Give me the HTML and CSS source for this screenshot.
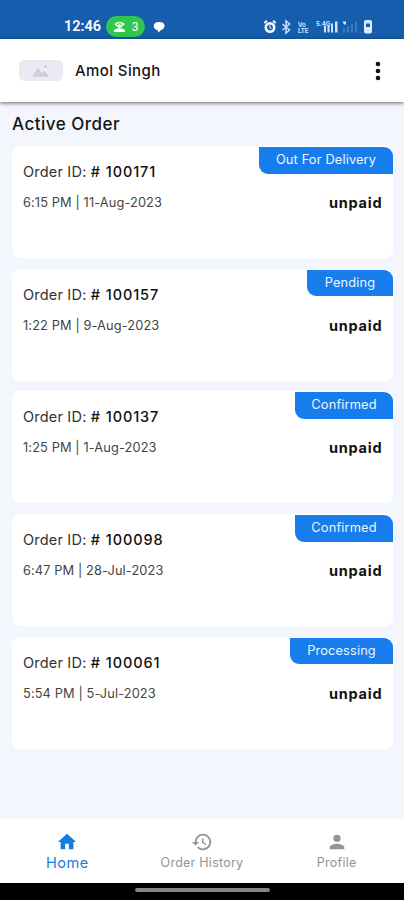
FILE: index.html
```html
<!DOCTYPE html>
<html lang="en">
<head>
<meta charset="utf-8">
<title>Active Order</title>
<link rel="stylesheet" href="styles.css">
</head>
<body>
<div class="status-bar">
  <span class="clock">12:46</span>
  <span class="hotspot"><svg width="13" height="12" viewBox="0 0 13 12"><path d="M1 3Q6.500-1.500 12 3L6.500 8Z" fill="#d9ffd9"/><path d="M4 3.500Q6.500 1.800 9 3.500" fill="none" stroke="#2fc74f"/><path d="M1 11V9l3-1.500h5L12 9v2z" fill="#fff"/></svg><span class="devices">3</span></span>
  <svg class="chat" width="12" height="12" viewBox="0 0 12 12"><path d="M5.500 1C9 .5 11.500 2 11.500 4.800c0 2-1.200 3.800-3.500 4.200L5.500 11.500l-1-2.500C2.500 9 .5 7.500.7 4.800.8 2.400 2.700 1.200 5.500 1Z" fill="#fff"/></svg>
  <svg class="indicators" width="112" height="18" viewBox="0 0 112 18">
    <g fill="none" stroke="#f4faff">
      <circle cx="6" cy="9.500" r="4.200" stroke-width="2.600"/><path d="M.3 5L3 2.800M11.700 5L9 2.800" stroke-width="2"/><path d="M6 7v3l1.500.5" stroke-width="1"/>
      <path d="M18.500 6l7 6-3.500 3v-12L25.500 6l-7 6" stroke="#c9e0f8" stroke-width="1.500"/>
    </g>
    <g fill="#d1e6fa">
      <rect x="60" y="8" width="2" height="6.500"/><rect x="63.500" y="7" width="2" height="7.500"/><rect x="67" y="5.500" width="2" height="9"/><rect x="71" y="3.500" width="2.500" height="11"/>
      <path d="M78.500 3.500h3.500v3h-2z"/>
    </g>
    <g fill="#4079c1"><rect x="79" y="10" width="2" height="4.500"/><rect x="83" y="8" width="2" height="6.500"/><rect x="87" y="6" width="2" height="8.500"/><rect x="91" y="4" width="2" height="10.500"/></g>
    <rect x="100" y="2" width="8" height="13.500" rx="2" fill="#d9ebfb"/><path d="M102 5.500h4V9h-4z" fill="#155dad"/>
    <g class="tiny"><text x="34" y="8.500">Vo</text><text x="34" y="14.500">LTE</text><text x="52" y="7.500">5.4G</text></g>
  </svg>
</div>
<header class="app-bar">
  <div class="avatar"><svg width="18" height="13" viewBox="0 0 18 13"><path d="M1 12L6 5l3.500 5 2.500-2.500L16 12z" fill="#d3d4da" stroke="#c4c5cb"/><path d="M13.500 1v3M12 2.500h3" stroke="#c2c3ca"/></svg></div>
  <span class="user">Amol Singh</span>
  <svg class="more" width="6" height="20" viewBox="0 0 6 20"><g fill="#111"><circle cx="3" cy="3" r="2.300"/><circle cx="3" cy="10" r="2.300"/><circle cx="3" cy="17" r="2.300"/></g></svg>
</header>
<main>
  <h1>Active Order</h1>
  <article class="card"><div class="badge delivery">Out For Delivery</div><p class="order">Order ID: <b># 100171</b></p><div class="details"><span>6:15 PM | 11-Aug-2023</span><strong>unpaid</strong></div></article>
  <article class="card"><div class="badge pending">Pending</div><p class="order">Order ID: <b># 100157</b></p><div class="details"><span>1:22 PM | 9-Aug-2023</span><strong>unpaid</strong></div></article>
  <article class="card"><div class="badge confirmed">Confirmed</div><p class="order">Order ID: <b># 100137</b></p><div class="details"><span>1:25 PM | 1-Aug-2023</span><strong>unpaid</strong></div></article>
  <article class="card"><div class="badge confirmed">Confirmed</div><p class="order">Order ID: <b># 100098</b></p><div class="details"><span>6:47 PM | 28-Jul-2023</span><strong>unpaid</strong></div></article>
  <article class="card"><div class="badge processing">Processing</div><p class="order">Order ID: <b># 100061</b></p><div class="details"><span>5:54 PM | 5-Jul-2023</span><strong>unpaid</strong></div></article>
</main>
<nav>
  <div class="tab active"><svg width="22" height="22" viewBox="0 0 24 24"><path fill="currentColor" d="M10 20v-6h4v6h5v-8h3L12 3 2 12h3v8z"/></svg><span>Home</span></div>
  <div class="tab history"><svg width="22" height="22" viewBox="0 0 24 24"><path fill="currentColor" d="M13 3a9 9 0 0 0-9 9H1l3.900 3.900L9 12H6a7 7 0 1 1 2.060 4.940l-1.420 1.420A9 9 0 1 0 13 3Zm-1 5v5l4.280 2.540.720-1.210-3.500-2.080V8z"/></svg><span>Order History</span></div>
  <div class="tab"><svg width="22" height="22" viewBox="0 0 24 24"><path fill="currentColor" d="M12 12a4 4 0 1 0 0-8 4 4 0 0 0 0 8Zm0 2c-2.670 0-8 1.340-8 4v2h16v-2c0-2.660-5.330-4-8-4Z"/></svg><span>Profile</span></div>
</nav>
<footer><div class="gesture"></div></footer>
</body>
</html>
```
FILE: styles.css
```css
* { box-sizing: border-box; }
body { margin: 0; width: 404px; height: 900px; overflow: hidden; display: flex; flex-direction: column; background: #f3f6fd; color: #151515; font-family: Inter, Roboto, sans-serif; }
.status-bar { height: 39px; flex: none; background: #155dad; display: flex; align-items: center; padding: 14px 28px 0 64px; color: #fff; }
.clock { width: 42px; font-family: Roboto, sans-serif; font-size: 14.500px; font-weight: 600; }
.hotspot { width: 39px; height: 21px; border-radius: 11px; background: #2fc74f; display: flex; align-items: center; justify-content: center; gap: 6px; font-family: Roboto, sans-serif; font-size: 12px; }
.chat { margin-left: 8px; }
.indicators { margin-left: auto; }
.tiny { fill: #d5e8fa; font-size: 6px; font-weight: 700; }
.app-bar { height: 63px; flex: none; display: flex; align-items: center; background: #fff; padding: 0 23px 0 19px; box-shadow: 0 1px 4px #0009; }
.avatar { width: 44px; height: 21px; border-radius: 5px; background: #e9eaf3; display: flex; align-items: center; justify-content: center; }
.user { margin-left: 12px; font-size: 15px; font-weight: 500; letter-spacing: .4px; }
.more { margin-left: auto; }
main { flex: 1; padding: 10px 11px 0 12px; }
h1 { margin: 0 0 10px; height: 24px; line-height: 24px; font-size: 17px; font-weight: 500; letter-spacing: .5px; }
.card { position: relative; height: 112px; margin-bottom: 10.700px; padding: 16px 11px; border-radius: 8px; background: #fff; }
.badge { position: absolute; right: 0; top: 1px; height: 26.500px; line-height: 26px; border-radius: 0 9px 0 9px; background: #177cec; color: #eef7ff; text-align: center; font-size: 12.800px; letter-spacing: .15px; }
.delivery { width: 134px; }
.pending { width: 86px; }
.confirmed { width: 98px; }
.processing { width: 103px; }
.order { margin: 0; height: 20px; line-height: 20px; font-size: 14.500px; letter-spacing: .2px; color: #333; }
.order b { font-weight: 500; letter-spacing: .9px; color: #111; }
.details { display: flex; justify-content: space-between; margin-top: 11px; line-height: 20px; font-size: 12.800px; letter-spacing: .12px; color: #454545; }
.details strong { margin-right: -.5px; font-size: 14.500px; font-weight: 700; letter-spacing: .8px; color: #111; }
nav { height: 64px; flex: none; display: flex; background: #fff; color: #949494; }
.tab { width: 33.333%; display: flex; flex-direction: column; align-items: center; padding-top: 12px; font-size: 12.500px; letter-spacing: .25px; }
.tab span { line-height: 20px; }
.active { color: #177cdf; font-size: 14.500px; letter-spacing: .5px; }
footer { height: 17px; flex: none; background: #000; display: flex; justify-content: center; padding-top: 5px; }
.gesture { width: 135px; height: 4px; border-radius: 2px; background: #858585; }
```
